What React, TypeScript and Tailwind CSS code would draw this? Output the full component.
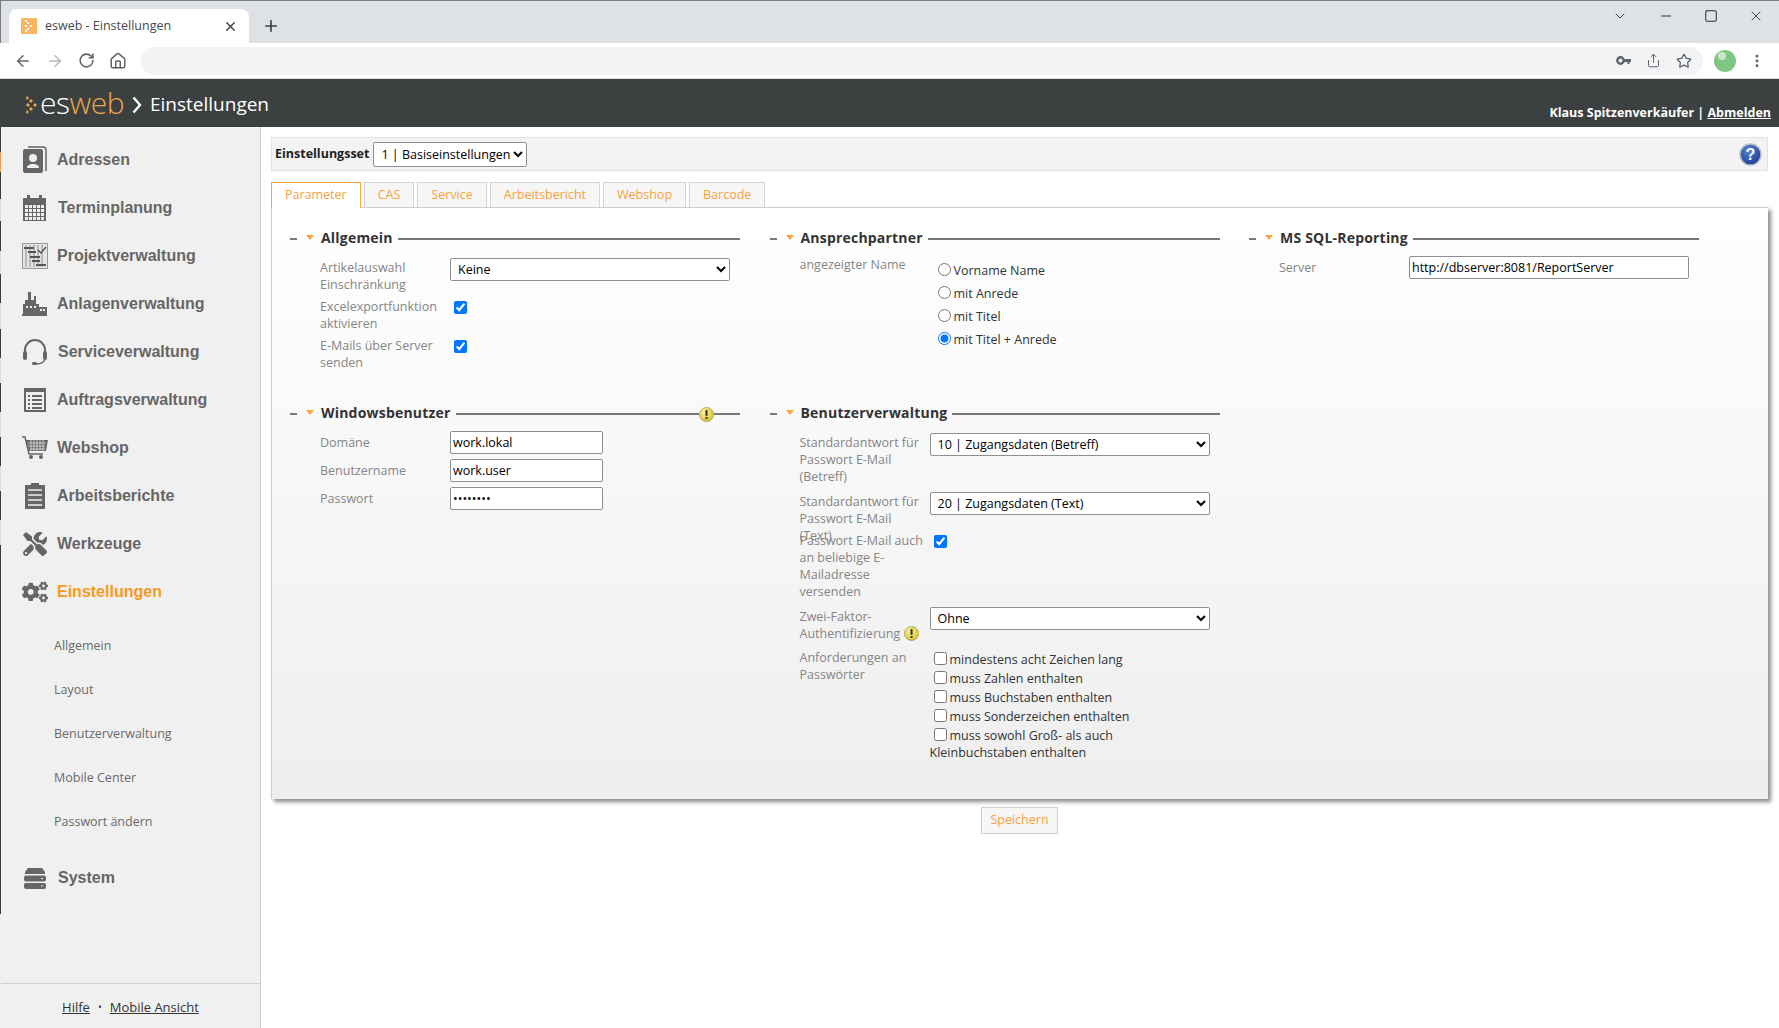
import { ReactNode } from 'react';
import {
  ArrowLeft,
  ArrowRight,
  ChevronDown,
  EllipsisVertical,
  House,
  Minus,
  Plus,
  RotateCw,
  Share,
  Square,
  Star,
  X,
} from 'lucide-react';
import { FaCogs, FaTools } from 'react-icons/fa';

const edgeStripes = [
  'h-[25px] bg-[#3a3a3a]', 'h-[20px] bg-[#e8a04a]', 'h-[27px] bg-[#3a3a3a]', 'h-[22px] bg-[#dcdcdc]',
  'h-[30px] bg-[#3a3a3a]', 'h-[23px] bg-[#dcdcdc]', 'h-[29px] bg-[#3a3a3a]', 'h-[26px] bg-[#dcdcdc]',
  'h-[29px] bg-[#3a3a3a]', 'h-[25px] bg-[#dcdcdc]', 'h-[29px] bg-[#3a3a3a]', 'h-[25px] bg-[#dcdcdc]',
  'h-[29px] bg-[#3a3a3a]', 'h-[25px] bg-[#dcdcdc]', 'h-[29px] bg-[#3a3a3a]', 'h-[25px] bg-[#dcdcdc]',
  'h-[29px] bg-[#3a3a3a]', 'h-[340px] bg-[#3a3a3a]',
];

function AddressIcon() {
  return (
    <svg width="26" height="28" viewBox="0 0 26 28">
      <path d="M6 1h15a3 3 0 0 1 3 3v21" fill="none" stroke="#666" strokeWidth="1.5" />
      <rect x="1" y="3" width="20" height="24" rx="2" fill="#666" />
      <circle cx="11" cy="12" r="4" fill="#f0f0f0" />
      <path d="M5 22c0-3 3-4 6-4s6 1 6 4z" fill="#f0f0f0" />
    </svg>
  );
}

function CalendarIcon() {
  return (
    <svg width="24" height="26" viewBox="0 0 24 26">
      <rect x="0" y="3" width="23" height="23" fill="#666" />
      <rect x="4" y="0" width="3" height="5" fill="#666" />
      <rect x="16" y="0" width="3" height="5" fill="#666" />
      <g fill="#f0f0f0">
        {[2, 6, 10, 14, 18].map((x) =>
          [10, 14, 18, 22].map((y) => <rect key={`${x}-${y}`} x={x} y={y} width="3" height="3" />),
        )}
      </g>
    </svg>
  );
}

function GanttIcon() {
  return (
    <svg width="26" height="26" viewBox="0 0 26 26">
      <rect x="0.5" y="0.5" width="25" height="25" fill="#e4e4e4" stroke="#999" />
      <path d="M4 2v22M8 2v22M12 2v22M16 2v22M20 2v22" stroke="#aaa" strokeWidth="1.5" />
      <path d="M2 5h10M6 9h8M8 14h10M10 18h8M14 22h10" stroke="#555" strokeWidth="2" />
      <path d="M16 7l3 3 5-6" fill="none" stroke="#555" strokeWidth="1.5" />
    </svg>
  );
}

function FactoryIcon() {
  return (
    <svg width="26" height="24" viewBox="0 0 26 24">
      <path d="M3 8h3V0h3v8h3V4h2v8h3v3h8v8H0v-1h1V12h2z" fill="#666" />
      <rect x="0" y="22" width="25" height="2" fill="#666" />
      <g fill="#f0f0f0">
        <rect x="4" y="14" width="2" height="2" />
        <rect x="8" y="14" width="2" height="2" />
        <rect x="12" y="14" width="2" height="2" />
        <rect x="18" y="17" width="2" height="2" />
        <rect x="21" y="17" width="2" height="2" />
      </g>
    </svg>
  );
}

function HeadsetIcon() {
  return (
    <svg width="26" height="28" viewBox="0 0 26 28">
      <path d="M3 15v-3a10 10 0 0 1 20 0v3" fill="none" stroke="#666" strokeWidth="2" />
      <rect x="1" y="13" width="4" height="9" rx="2" fill="#666" />
      <rect x="21" y="13" width="4" height="9" rx="2" fill="#666" />
      <path d="M23 21c0 3-4 5-9 5" fill="none" stroke="#666" strokeWidth="1.5" />
      <rect x="10" y="24" width="5" height="3" rx="1.5" fill="#666" />
    </svg>
  );
}

function ListIcon() {
  return (
    <svg width="22" height="24" viewBox="0 0 22 24">
      <rect x="1" y="1" width="20" height="22" fill="none" stroke="#666" strokeWidth="2" />
      <rect x="1" y="1" width="20" height="3" fill="#666" />
      <path d="M4 8h2M8 8h10M4 12h2M8 12h10M4 16h2M8 16h10M4 20h2M8 20h10" stroke="#666" strokeWidth="2" />
    </svg>
  );
}

function CartIcon() {
  return (
    <svg width="26" height="24" viewBox="0 0 26 24">
      <path d="M0 1h3l4 17h14" fill="none" stroke="#666" strokeWidth="1.5" />
      <path d="M4 4h22l-2 11H7z" fill="#666" />
      <path d="M6 7h18M6 10h17M8 13h15M9 4v11M12 4v11M15 4v11M18 4v11M21 4v11" stroke="#f0f0f0" strokeWidth="0.7" />
      <circle cx="9" cy="21" r="2" fill="#666" />
      <circle cx="19" cy="21" r="2" fill="#666" />
    </svg>
  );
}

function ClipboardIcon() {
  return (
    <svg width="20" height="26" viewBox="0 0 20 26">
      <path d="M0 2h6V0h8v2h6v24H0z" fill="#666" />
      <path d="M3 7h14M3 12h14M3 17h14M3 22h14" stroke="#f0f0f0" strokeWidth="1.5" />
    </svg>
  );
}

function ServerIcon() {
  return (
    <svg width="22" height="21" viewBox="0 0 22 21">
      <path d="M4 0h14l3 4v2H1V4z" fill="#666" />
      <rect x="0" y="7.5" width="22" height="6" rx="2" fill="#666" />
      <rect x="0" y="15" width="22" height="6" rx="2" fill="#666" />
      <rect x="17" y="10" width="2" height="1" fill="#f0f0f0" />
      <rect x="17" y="17.5" width="2" height="1" fill="#f0f0f0" />
    </svg>
  );
}

const navItems: { label: string; icon: ReactNode; gap: string }[] = [
  { label: 'Adressen', icon: <AddressIcon />, gap: 'ml-[8px]' },
  { label: 'Terminplanung', icon: <CalendarIcon />, gap: 'ml-[9px]' },
  { label: 'Projektverwaltung', icon: <GanttIcon />, gap: 'ml-[8px]' },
  { label: 'Anlagenverwaltung', icon: <FactoryIcon />, gap: 'ml-[8px]' },
  { label: 'Serviceverwaltung', icon: <HeadsetIcon />, gap: 'ml-[9px]' },
  { label: 'Auftragsverwaltung', icon: <ListIcon />, gap: 'ml-[8px]' },
  { label: 'Webshop', icon: <CartIcon />, gap: 'ml-[8px]' },
  { label: 'Arbeitsberichte', icon: <ClipboardIcon />, gap: 'ml-[8px]' },
  { label: 'Werkzeuge', icon: <FaTools size={24} color="#666" />, gap: 'ml-[8px]' },
];

const subItems = ['Allgemein', 'Layout', 'Benutzerverwaltung', 'Mobile Center', 'Passwort ändern'];

function NavItem({ label, icon, gap, active }: { label: string; icon: ReactNode; gap: string; active?: boolean }) {
  return (
    <div className="flex h-12 items-center pl-[20px]">
      <div className="flex w-[28px] shrink-0 items-center justify-center">{icon}</div>
      <span
        className={`${gap} font-['Liberation_Sans',sans-serif] text-[16px] font-bold ${active ? 'text-[#f59a1e]' : 'text-[#666]'}`}
      >
        {label}
      </span>
    </div>
  );
}

function Sidebar() {
  return (
    <aside className="flex w-[261px] shrink-0 border-r border-[#cfcfcf] bg-[#f0f0f0]">
      <div className="h-[900px] w-px shrink-0 overflow-hidden">
        {edgeStripes.map((c, i) => (
          <div key={i} className={c} />
        ))}
      </div>
      <div className="flex min-w-0 flex-1 flex-col">
        <nav className="flex-1 pt-[9px]">
          {navItems.map((item) => (
            <NavItem key={item.label} {...item} />
          ))}
          <NavItem label="Einstellungen" icon={<FaCogs size={26} color="#666" />} gap="ml-[8px]" active />
          <div className="mt-[8px]">
            {subItems.map((s) => (
              <div key={s} className="flex h-11 items-center pl-[53px] text-[12.5px] text-[#6a6a6a]">
                {s}
              </div>
            ))}
          </div>
          <div className="mt-[10px]">
            <NavItem label="System" icon={<ServerIcon />} gap="ml-[9px]" />
          </div>
        </nav>
        <div className="flex h-[45px] items-center justify-center gap-[8px] border-t border-[#cfcfcf] pt-[3px] text-[13px] text-[#333]">
          <span className="underline">Hilfe</span>
          <span className="text-[10px]">•</span>
          <span className="underline">Mobile Ansicht</span>
        </div>
      </div>
    </aside>
  );
}

function Favicon() {
  return (
    <svg width="16" height="16" viewBox="0 0 16 16">
      <rect width="16" height="16" fill="#f9b55f" />
      <g fill="#fff">
        <rect x="4" y="2" width="2" height="2" />
        <rect x="6" y="4" width="2" height="2" />
        <rect x="9" y="7" width="2" height="2" />
        <rect x="6" y="10" width="2" height="2" />
        <rect x="4" y="12" width="2" height="2" />
        <rect x="4" y="7" width="2" height="2" />
      </g>
    </svg>
  );
}

function KeyIcon() {
  return (
    <svg width="15" height="9" viewBox="0 0 15 9">
      <circle cx="4.5" cy="4.5" r="3.2" fill="none" stroke="#5f6368" strokeWidth="2.4" />
      <path d="M7 3h8v3h-1.5v2h-2V6H7z" fill="#5f6368" />
    </svg>
  );
}

function BrowserChrome() {
  return (
    <div className="shrink-0">
      <div className="flex h-[43px] items-end border-t border-l border-[#7a7d80] bg-[#dee1e6]">
        <div className="ml-[8px] flex h-[34px] w-[240px] items-center rounded-t-[8px] bg-white pl-[12px] pr-[11px]">
          <Favicon />
          <span className="ml-[8px] flex-1 text-[12.5px] text-[#45494e]">esweb - Einstellungen</span>
          <X size={15} strokeWidth={2.5} color="#45494e" />
        </div>
        <div className="ml-[13px] flex h-[34px] items-center">
          <Plus size={18} strokeWidth={2.2} color="#3c4043" />
        </div>
        <div className="ml-auto flex h-[30px] items-center gap-[30px] self-start pr-[15px] text-[#222]">
          <ChevronDown size={16} strokeWidth={1.2} />
          <Minus size={16} strokeWidth={1.4} />
          <Square size={14} strokeWidth={1.6} />
          <X size={16} strokeWidth={1.2} />
        </div>
      </div>
      <div className="flex h-[36px] items-center border-b border-[#dadce0] bg-white pl-[14px]">
        <div className="flex w-[127px] shrink-0 items-center gap-[14px]">
          <ArrowLeft size={18} strokeWidth={2} color="#5f6368" />
          <ArrowRight size={18} strokeWidth={2} color="#b5b8bc" />
          <RotateCw size={17} strokeWidth={2.2} color="#5f6368" />
          <House size={18} strokeWidth={2} color="#5f6368" />
        </div>
        <div className="flex h-[28px] w-[1562px] shrink-0 items-center justify-end gap-[15px] rounded-full bg-[#f1f3f4] pr-[11px]">
          <KeyIcon />
          <Share size={15} strokeWidth={1.6} color="#5f6368" />
          <Star size={16} strokeWidth={2} color="#5f6368" />
        </div>
        <div className="relative ml-[11px] h-[22px] w-[22px] shrink-0 rounded-full bg-[#81c784]">
          <div className="absolute left-[4px] top-[2px] h-[8px] w-[8px] rounded-full bg-[#cbe6cd]" />
        </div>
        <EllipsisVertical size={16} strokeWidth={2.4} color="#5f6368" className="ml-[13px]" />
      </div>
    </div>
  );
}

function AppHeader() {
  return (
    <header className="flex h-12 shrink-0 items-center bg-[#3c4040] pl-[26px] pr-2">
      <svg width="13" height="18" viewBox="0 0 13 18" className="mt-[3px]">
        <g fill="#e9a64c">
          <path d="M1 0l2 2-2 2-1-2z" />
          <path d="M5 3l2 2-2 2-2-2z" />
          <path d="M9 7l2 2-2 2-2-2z" />
          <path d="M5 11l2 2-2 2-2-2z" />
          <path d="M1 14l2 2-2 2-1-2z" />
          <path d="M2 7l2 2-2 2-2-2z" />
        </g>
      </svg>
      <span className="ml-[1px] flex items-baseline font-['Open_Sans',sans-serif] text-[30px] font-light leading-none tracking-[-0.5px]">
        <span className="text-white">es</span>
        <span className="text-[#e9a64c]">web</span>
      </span>
      <svg width="10" height="18" viewBox="0 0 10 18" className="ml-[8px] mt-[3px]">
        <path d="M1.5 1.5L8 9l-6.5 7.5" fill="none" stroke="#fff" strokeWidth="2.4" />
      </svg>
      <span className="ml-[8px] mt-[2px] text-[19px] text-white">Einstellungen</span>
      <span className="ml-auto mt-[20px] text-[12.5px] font-bold text-white">
        Klaus Spitzenverkäufer | <span className="underline">Abmelden</span>
      </span>
    </header>
  );
}

function Warn({ className = '' }: { className?: string }) {
  return (
    <svg width="15" height="15" viewBox="0 0 15 15" className={`shrink-0 ${className}`}>
      <defs>
        <radialGradient id="warnFill" cx="40%" cy="35%" r="70%">
          <stop offset="0%" stopColor="#fff3a0" />
          <stop offset="100%" stopColor="#d4bd2a" />
        </radialGradient>
      </defs>
      <circle cx="7.5" cy="7.5" r="7" fill="url(#warnFill)" stroke="#a89c58" strokeWidth="0.8" />
      <rect x="6.4" y="3" width="2.2" height="6" rx="1" fill="#3a3a20" />
      <rect x="6.5" y="10" width="2" height="2" fill="#3a3a20" />
    </svg>
  );
}

function HelpIcon() {
  return (
    <svg width="23" height="23" viewBox="0 0 23 23">
      <defs>
        <radialGradient id="helpFill" cx="40%" cy="30%" r="75%">
          <stop offset="0%" stopColor="#5b86d8" />
          <stop offset="100%" stopColor="#17398f" />
        </radialGradient>
      </defs>
      <circle cx="11.5" cy="11.5" r="10.5" fill="url(#helpFill)" stroke="#b4bccb" strokeWidth="1.5" />
      <text x="11.5" y="17" textAnchor="middle" fontSize="16" fontWeight="700" fill="#fff" fontFamily="Liberation Sans, sans-serif">
        ?
      </text>
    </svg>
  );
}

function Section({ title, warn, children }: { title: string; warn?: boolean; children: ReactNode }) {
  return (
    <section>
      <div className="flex h-5 items-center">
        <span className="mt-[4px] h-[2px] w-[7px] bg-[#777]" />
        <svg width="8" height="5" viewBox="0 0 8 5" className="ml-[9px]">
          <path d="M0 0h8L4 5z" fill="#f7a83c" />
        </svg>
        <h3 className="ml-[7px] text-[14px] font-bold tracking-[0.2px] text-[#333]">{title}</h3>
        <div className="ml-[5px] mt-[4px] h-[2px] flex-1 bg-[#777]" />
        {warn && (
          <>
            <Warn className="mt-[4px]" />
            <div className="mt-[4px] h-[2px] w-[26px] bg-[#777]" />
          </>
        )}
      </div>
      <div className="mt-[9px]">{children}</div>
    </section>
  );
}

function Row({ label, height, children }: { label: ReactNode; height: string; children?: ReactNode }) {
  return (
    <div className={`grid grid-cols-[160px_280px] ${height}`}>
      <div className="pl-[30px] pr-[4px] pt-[3px] text-[12.5px] leading-[17px] text-[#858585]">{label}</div>
      <div>{children}</div>
    </div>
  );
}

function Select({ value, full = true }: { value: string; full?: boolean }) {
  return (
    <select
      defaultValue={value}
      className={`${full ? 'h-[23px] w-[280px]' : 'h-[25px]'} rounded-[2px] border border-[#8f8f8f] bg-white pl-[3px] text-[12.5px] text-black`}
    >
      <option>{value}</option>
    </select>
  );
}

function TextInput({ value, type = 'text', width }: { value: string; type?: string; width: string }) {
  return (
    <input
      type={type}
      defaultValue={value}
      className={`block h-[23px] ${width} rounded-[2px] border border-[#8f8f8f] bg-white px-[2px] text-[12.5px] text-black`}
    />
  );
}

function Check({ checked }: { checked?: boolean }) {
  return (
    <input
      type="checkbox"
      defaultChecked={checked}
      className="ml-[4px] mt-[6px] block h-[13px] w-[13px]"
    />
  );
}

const radios = [
  { label: 'Vorname Name' },
  { label: 'mit Anrede' },
  { label: 'mit Titel' },
  { label: 'mit Titel + Anrede', checked: true },
];

const pwRules = [
  'mindestens acht Zeichen lang',
  'muss Zahlen enthalten',
  'muss Buchstaben enthalten',
  'muss Sonderzeichen enthalten',
  'muss sowohl Groß- als auch Kleinbuchstaben enthalten',
];

const tabs = ['Parameter', 'CAS', 'Service', 'Arbeitsbericht', 'Webshop', 'Barcode'];

function SettingsForm() {
  return (
    <div className="grid h-[592px] grid-cols-[450px_450px_450px] grid-rows-[175px_auto] gap-x-[29.5px] border-t border-l border-[#cfcfcf] bg-gradient-to-b from-white to-[#eeeeee] pl-[18px] pt-[19px] shadow-[3px_3px_4px_rgba(0,0,0,0.45)]">
      <Section title="Allgemein">
        <Row label="Artikelauswahl Einschränkung" height="h-[39px]">
          <Select value="Keine" />
        </Row>
        <Row label="Excelexportfunktion aktivieren" height="h-[39px]">
          <Check checked />
        </Row>
        <Row label="E-Mails über Server senden" height="h-[39px]">
          <Check checked />
        </Row>
      </Section>

      <Section title="Ansprechpartner">
        <div className="grid grid-cols-[160px_280px]">
          <div className="pl-[30px] text-[12.5px] leading-[17px] text-[#858585]">angezeigter Name</div>
          <div className="pt-[4px]">
            {radios.map((r) => (
              <label key={r.label} className="flex h-[23px] items-center text-[12.5px] text-[#333]">
                <input
                  type="radio"
                  name="anzeige"
                  defaultChecked={r.checked}
                  className="ml-[8px] h-[13px] w-[13px] -translate-y-[2px]"
                />
                <span className="ml-[3px]">{r.label}</span>
              </label>
            ))}
          </div>
        </div>
      </Section>

      <Section title="MS SQL-Reporting">
        <Row label="Server" height="h-[39px]">
          <TextInput value="http://dbserver:8081/ReportServer" width="w-[280px]" />
        </Row>
      </Section>

      <Section title="Windowsbenutzer" warn>
        <Row label="Domäne" height="h-[28px]">
          <TextInput value="work.lokal" width="w-[153px]" />
        </Row>
        <Row label="Benutzername" height="h-[28px]">
          <TextInput value="work.user" width="w-[153px]" />
        </Row>
        <Row label="Passwort" height="h-[28px]">
          <TextInput value="workuser" type="password" width="w-[153px]" />
        </Row>
      </Section>

      <Section title="Benutzerverwaltung">
        <Row label="Standardantwort für Passwort E-Mail (Betreff)" height="h-[59px]">
          <Select value="10 | Zugangsdaten (Betreff)" />
        </Row>
        <Row label="Standardantwort für Passwort E-Mail (Text)" height="h-[39px]">
          <Select value="20 | Zugangsdaten (Text)" />
        </Row>
        <Row label="Passwort E-Mail auch an beliebige E-Mailadresse versenden" height="h-[76px]">
          <Check checked />
        </Row>
        <Row
          label={
            <>
              Zwei-Faktor-
              <br />
              <span className="inline-flex items-center gap-[4px]">
                Authentifizierung
                <Warn />
              </span>
            </>
          }
          height="h-[41px]"
        >
          <Select value="Ohne" />
        </Row>
        <Row label="Anforderungen an Passwörter">
          <div className="pt-[5px] text-[12.5px] leading-[17px] text-[#333]">
            {pwRules.map((rule) => (
              <div key={rule} className="mb-[2px]">
                <input type="checkbox" className="ml-[4px] mr-[3px] inline-block h-[13px] w-[13px] align-[-1px]" />
                {rule}
              </div>
            ))}
          </div>
        </Row>
      </Section>
    </div>
  );
}

function MainContent() {
  return (
    <main className="min-w-0 flex-1 bg-white pl-[10px] pr-[11px] pt-[10px]">
      <div className="flex h-[34px] items-center border border-[#e2e2e2] bg-[#f3f3f3] pl-[3px] pr-[5px]">
        <span className="text-[12.5px] font-bold text-[#222]">Einstellungsset</span>
        <span className="ml-[4px]">
          <Select value="1 | Basiseinstellungen" full={false} />
        </span>
        <span className="ml-auto">
          <HelpIcon />
        </span>
      </div>
      <div className="mt-[11px] flex h-[25px] items-end gap-[3px]">
        {tabs.map((t, i) => (
          <div
            key={t}
            className={`flex items-center border border-b-0 px-[13px] text-[12.5px] text-[#f7a13d] ${
              i === 0 ? 'relative z-10 -mb-px h-[26px] border-[#f7a83c] bg-white' : 'h-[25px] border-[#d4d4d4] bg-[#f6f6f6]'
            }`}
          >
            {t}
          </div>
        ))}
      </div>
      <SettingsForm />
      <div className="mt-[8px] flex justify-center">
        <button
          type="button"
          className="h-[27px] w-[77px] border border-[#cfcfcf] bg-[#f6f6f6] text-[12.5px] text-[#f7a13d]"
        >
          Speichern
        </button>
      </div>
    </main>
  );
}

export default function App() {
  return (
    <div className="flex h-screen flex-col overflow-hidden bg-white font-['Open_Sans',sans-serif]">
      <BrowserChrome />
      <AppHeader />
      <div className="flex min-h-0 flex-1">
        <Sidebar />
        <MainContent />
      </div>
    </div>
  );
}
